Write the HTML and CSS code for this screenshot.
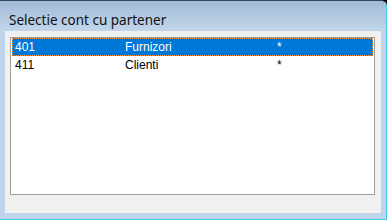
FILE: index.html
```html
<!DOCTYPE html>
<html>
<head>
<meta charset="utf-8">
<link rel="stylesheet" href="styles.css">
</head>
<body>
<div class="window">
  <div class="titlebar"><span class="title">Selectie cont cu partener</span></div>
  <div class="frame">
    <div class="client">
      <div class="list">
        <div class="row selected"><span>401</span><span>Furnizori</span><span>*</span></div>
        <div class="row"><span>411</span><span>Clienti</span><span>*</span></div>
      </div>
    </div>
  </div>
</div>
</body>
</html>
```
FILE: styles.css
```css
html, body {
  margin: 0;
  padding: 0;
}
body {
  width: 387px;
  height: 220px;
  background: #000;
  overflow: hidden;
}
.window {
  width: 386px;
  height: 218px;
  border-top: 1px solid #3a4654;
  border-right: 1px solid #3ecbea;
  border-bottom: 1px solid #3ecbea;
  border-top-right-radius: 6px;
  background: #bfd4ea;
  display: flex;
  flex-direction: column;
  overflow: hidden;
}
.titlebar {
  height: 30px;
  flex: none;
  background: linear-gradient(to bottom, #a2bbd6, #c1d5ea);
  display: flex;
  align-items: flex-start;
  padding-left: 9px;
  box-sizing: border-box;
}
.title {
  font-family: "Noto Sans", sans-serif;
  font-size: 13.5px;
  line-height: 18px;
  margin-top: 10px;
  color: #111;
}
.frame {
  flex: 1;
  padding: 0 5px 6px 5px;
  display: flex;
}
.client {
  flex: 1;
  background: #f0f0f0;
  padding: 6px 6px 18px 5px;
  display: flex;
}
.list {
  flex: 1;
  background: #fff;
  border: 1px solid #a0a0a0;
  padding: 0 1px;
}
.row {
  display: grid;
  grid-template-columns: 110px 152px 1fr;
  height: 18px;
  line-height: 18px;
  padding-left: 3px;
  box-sizing: border-box;
  font-family: "Liberation Sans", Arial, sans-serif;
  font-size: 12px;
  color: #000;
}
.row.selected {
  background: #0078d7;
  color: #fff;
  outline: 1px dotted #ff9a3c;
  outline-offset: -1px;
}
```
